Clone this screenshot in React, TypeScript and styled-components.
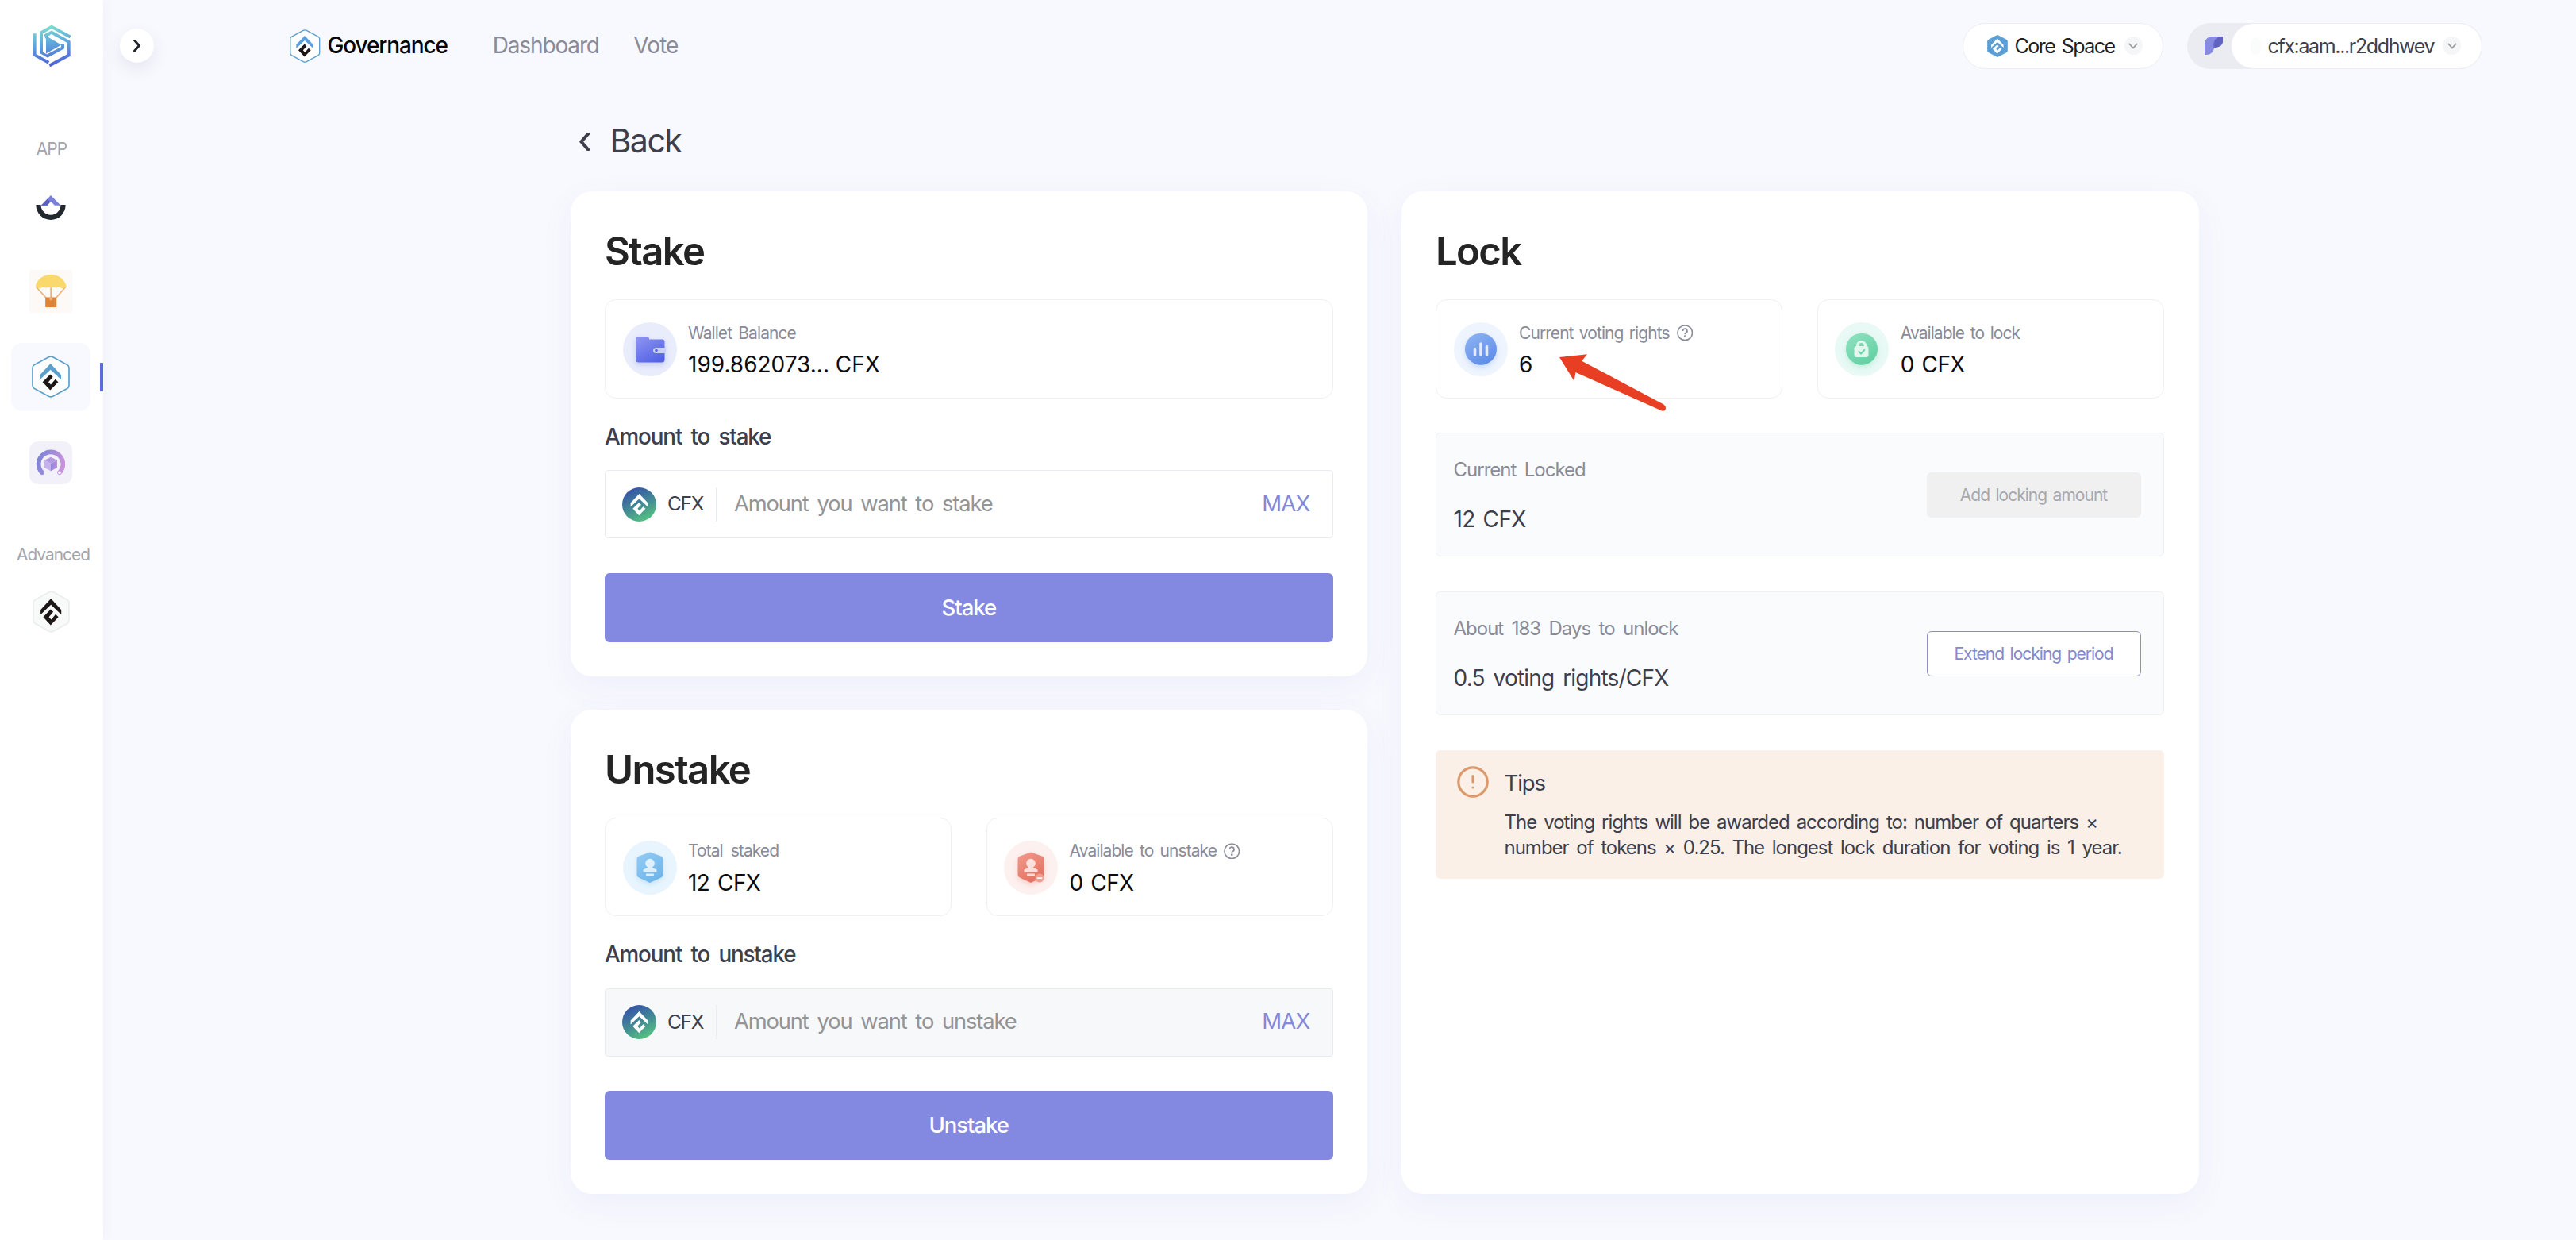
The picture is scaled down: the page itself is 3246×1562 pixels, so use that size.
import React from "react";
import styled, { createGlobalStyle } from "styled-components";

const Global = createGlobalStyle`
  *, *::before, *::after { box-sizing: border-box; }
  body {
    margin: 0;
    background: #f8f9fe;
    color: #3d3f4c;
    font-family: Inter, "Liberation Sans", sans-serif;
    font-kerning: normal;
  }
  svg { display: block; flex: none; }
`;

/* ---------- primitives ---------- */

const Text = styled.span<{ size: number; ls?: number; ws?: number; weight?: number; color?: string; lh?: number }>`
  display: block;
  white-space: nowrap;
  font-size: ${(p) => p.size}px;
  letter-spacing: ${(p) => p.ls ?? 0}px;
  word-spacing: ${(p) => p.ws ?? 0}px;
  font-weight: ${(p) => p.weight ?? 400};
  color: ${(p) => p.color ?? "inherit"};
  line-height: ${(p) => (p.lh ? `${p.lh}px` : "1.2")};
`;

/* ---------- drawings ---------- */

const HEX = "M184 121.500Q192 117.500 200 121.500L255 151Q261 155 261 162V228Q261 235 255 239L200 268.500Q192 272.500 184 268.500L129 239Q123 235 123 228V162Q123 155 129 151Z";
const CHEVRON = "191,146 231,188 231,206 191,169 151,206 151,188";
const HOOK = "190,186 200,196 183,215 192,225 209,205 220,215 190,246 161,215";

const HexMark = ({ w, h, stroke, line, fill, top, bottom }: { w: number; h: number; stroke: string; line: number; fill: string; top: string; bottom: string }) => (
  <svg width={w} height={h} viewBox="120 116 144 158" preserveAspectRatio="none">
    <path d={HEX} fill={fill} stroke={stroke} strokeWidth={line} />
    <polygon points={CHEVRON} fill={top} />
    <polygon points={HOOK} fill={bottom} />
  </svg>
);

const SpaceIcon = () => (
  <svg width="26" height="28" viewBox="120 116 144 158" preserveAspectRatio="none">
    <path d={HEX} fill="#5b9fd4" stroke="#5b9fd4" strokeWidth="4" />
    <g transform="translate(191 196) scale(1.08) translate(-191 -196)">
      <polygon points={CHEVRON} fill="#fff" />
      <polygon points={HOOK} fill="#fff" />
    </g>
  </svg>
);

const Coin = () => (
  <svg width="43" height="43" viewBox="0 0 43 43">
    <defs>
      <linearGradient id="coin" x1="0.25" y1="0.05" x2="0.7" y2="1">
        <stop offset="0" stopColor="#3653a8" />
        <stop offset="0.5" stopColor="#438a95" />
        <stop offset="1" stopColor="#55c57f" />
      </linearGradient>
    </defs>
    <circle cx="21.500" cy="21.500" r="21.500" fill="url(#coin)" />
    <g transform="translate(21.500 21.700) scale(0.272) translate(-191 -196)">
      <polygon points={CHEVRON} fill="#fff" />
      <polygon points={HOOK} fill="#fff" />
    </g>
  </svg>
);

const AppLogo = () => (
  <svg width="48" height="53" viewBox="123 94 144 158">
    <defs>
      <linearGradient id="logo" gradientUnits="userSpaceOnUse" x1="185" y1="95" x2="205" y2="250">
        <stop offset="0" stopColor="#7fe0cd" />
        <stop offset="0.45" stopColor="#5fa6dc" />
        <stop offset="1" stopColor="#4f5fd6" />
      </linearGradient>
    </defs>
    <g fill="none" stroke="url(#logo)" strokeWidth="12">
      <path d="M131 127V208L184 237" />
      <path d="M266 140L195 102L156 124V200L177 213L237 181V168" />
      <path d="M174 146V134L195 123L260 159V209L187 248" />
    </g>
    <path d="M174 136L232 170L174 203Z" fill="url(#logo)" />
    <path d="M167 138V193M190 133L248 166V187L181 223L150 205" fill="none" stroke="#fff" strokeWidth="7" />
  </svg>
);

const SwapIcon = () => (
  <svg width="38" height="33" viewBox="134 736 116 99">
    <path d="M135 775A57 58 0 0 0 249 775H230A38 39 0 0 1 154 775Z" fill="#22282e" />
    <path d="M192 738L230 777H207L192 762L178 777H155Z" fill="#7b7fdc" />
    <path d="M155 777L179 752L190 764L178 777Z" fill="#5c60c4" />
  </svg>
);

const ParachuteIcon = () => (
  <svg width="54" height="54" viewBox="111 1022 161 161">
    <rect x="111" y="1022" width="161" height="161" rx="8" fill="#fdf9f7" />
    <path d="M137 1086L174 1127M247 1086L211 1127M192 1086V1130" stroke="#e9b27c" strokeWidth="5" fill="none" />
    <path d="M134 1084C140 1056 164 1040 192 1040S244 1056 250 1084Q240 1092 231 1090Q221 1083 211 1090Q202 1083 192 1090Q182 1083 173 1090Q163 1083 153 1090Q144 1092 134 1084Z" fill="#f9d96b" />
    <rect x="171" y="1125" width="42" height="37" rx="2" fill="#dd8438" />
    <rect x="187" y="1125" width="10" height="11" fill="#f0b37e" />
  </svg>
);

const CubeIcon = () => (
  <svg width="54" height="54" viewBox="111 438 162 162">
    <defs>
      <linearGradient id="ring" x1="0" y1="0.2" x2="1" y2="0.5">
        <stop offset="0" stopColor="#7d83d8" />
        <stop offset="1" stopColor="#c793dc" />
      </linearGradient>
      <linearGradient id="ringDot" x1="0" y1="0" x2="1" y2="0">
        <stop offset="0" stopColor="#8c87d8" />
        <stop offset="1" stopColor="#c08fdc" />
      </linearGradient>
    </defs>
    <rect x="111" y="438" width="162" height="162" rx="34" fill="#f2f1f9" />
    <path d="M159 556A46 46 0 1 1 225 556" fill="none" stroke="url(#ring)" strokeWidth="17" strokeLinecap="round" />
    <circle cx="225" cy="556" r="5.500" fill="#fff" />
    <path d="M192 497L216 509L192 522L168 509Z" fill="#b69be0" />
    <path d="M168 509L192 522V550L168 537Z" fill="#c4b0ea" />
    <path d="M216 509L192 522V550L216 537Z" fill="url(#ringDot)" />
  </svg>
);

const Chevron = ({ dir, w, h, color, line }: { dir: "left" | "right" | "down"; w: number; h: number; color: string; line: number }) => {
  const d = { left: "M9 1.500L2 11L9 20.500", right: "M2 1.500L9 11L2 20.500", down: "M2 2L9 9L16 2" }[dir];
  return (
    <svg width={w} height={h} viewBox={dir === "down" ? "0 0 18 11" : "0 0 11 22"} preserveAspectRatio="none">
      <path d={d} fill="none" stroke={color} strokeWidth={line} strokeLinecap="round" strokeLinejoin="round" />
    </svg>
  );
};

const WalletGlyph = () => (
  <svg width="23" height="23" viewBox="0 0 23 23">
    <path d="M0 23V10C0 4 4 0 10 0H22C16 1 13.500 5 12 11V14C11.500 20 7 23 2 23Z" fill="#868ae0" />
    <path d="M11.500 14C10.500 5 14 0 23 0V6C23 11 19 14 11.500 14Z" fill="#6163c3" />
  </svg>
);

type Kind = "wallet" | "staked" | "unstake" | "votes" | "lock";

const halo: Record<Kind, string> = { wallet: "#e9edfb", staked: "#e9f5fe", unstake: "#fdf1ef", votes: "#eff5fe", lock: "#e9f9f5" };
const from: Record<Kind, string> = { wallet: "#8e94f0", staked: "#93cbf3", unstake: "#f09a8c", votes: "#8db4f3", lock: "#8fe2c0" };
const to: Record<Kind, string> = { wallet: "#5363e6", staked: "#6db5ea", unstake: "#e4705f", votes: "#5e8ce8", lock: "#62cfa2" };

const Stamp = () => (
  <g fill="#fff" opacity="0.75">
    <circle cx="34" cy="28.500" r="5.800" />
    <path d="M31 31H37V34L42.500 36.500V39.500H25.500V36.500L31 34Z" />
    <rect x="29" y="41.500" width="10" height="3.200" rx="0.800" />
  </g>
);

const StatIcon = ({ kind }: { kind: Kind }) => (
  <svg width="68" height="68" viewBox="0 0 68 68">
    <defs>
      <linearGradient id={`g-${kind}`} x1="0.1" y1="0" x2="0.7" y2="1">
        <stop offset="0" stopColor={from[kind]} />
        <stop offset="1" stopColor={to[kind]} />
      </linearGradient>
      <filter id={`s-${kind}`} x="-50%" y="-50%" width="200%" height="200%">
        <feDropShadow dx="0" dy="3" stdDeviation="3.500" floodColor={to[kind]} floodOpacity="0.28" />
      </filter>
    </defs>
    <circle cx="34" cy="34" r="34" fill={halo[kind]} />
    <g filter={`url(#s-${kind})`} fill={`url(#g-${kind})`}>
      {kind === "wallet" && <path d="M16 20.500Q16 18 18.500 18H30Q33 18 33 21.500H49.500Q52.500 21.500 52.500 24.500V47Q52.500 50.500 49 50.500H19.500Q16 50.500 16 47Z" />}
      {(kind === "staked" || kind === "unstake") && <path d="M34 14.500L48 19.500Q50.500 20.500 50.500 23V43Q50.500 45.500 48 46.500L34 53L20 46.500Q17.500 45.500 17.500 43V23Q17.500 20.500 20 19.500Z" />}
      {(kind === "votes" || kind === "lock") && <circle cx="34" cy="33.700" r="20" />}
    </g>
    {kind === "wallet" && (
      <>
        <path d="M54 32H42Q38 32 38 35.500T42 39H54Z" fill="#c9d0fa" />
        <circle cx="42" cy="35.500" r="1.800" fill="#5363e6" />
      </>
    )}
    {(kind === "staked" || kind === "unstake") && <Stamp />}
    {kind === "unstake" && (
      <>
        <circle cx="45" cy="47" r="5.600" fill="#f0a093" />
        <rect x="41.500" y="46.200" width="7" height="1.800" rx="0.900" fill="#fff" />
      </>
    )}
    {kind === "votes" && <path d="M26.500 33.500V41M34 27V41M41.500 30.500V41" stroke="#fff" strokeOpacity="0.8" strokeWidth="3.600" strokeLinecap="round" />}
    {kind === "lock" && (
      <>
        <path d="M28.500 31V29.500A5 5 0 0 1 38.500 29.500V31" fill="none" stroke="#e2f8ef" strokeWidth="3.200" />
        <rect x="24.500" y="30" width="18" height="14" rx="3" fill="#e2f8ef" />
        <path d="M30.500 37L33 39.500L37.300 35" fill="none" stroke="#6bd3a9" strokeWidth="2" strokeLinecap="round" />
      </>
    )}
  </svg>
);

const HelpIcon = () => (
  <svg width="20.500" height="20.500" viewBox="0 0 24 24" fill="none" stroke="#898b98" strokeWidth="1.900">
    <circle cx="12" cy="12" r="10.900" />
    <path d="M8.800 9.400A3.200 3.200 0 1 1 12.900 12.300Q12 12.800 12 14.200" />
    <circle cx="12" cy="17.200" r="0.600" />
  </svg>
);

const WarnIcon = () => (
  <svg width="40" height="40" viewBox="0 0 40 40" fill="none" stroke="#dc9a6c" strokeWidth="3.200">
    <circle cx="20" cy="20" r="18.200" />
    <path d="M20 12.500V20" strokeLinecap="round" />
    <circle cx="20" cy="27" r="1.600" fill="#dc9a6c" stroke="none" />
  </svg>
);

/* ---------- shell ---------- */

const Shell = styled.div`
  display: flex;
  height: 1562px;
  overflow: hidden;
`;

const Sidebar = styled.aside`
  flex: none;
  width: 130px;
  background: #fff;
  display: flex;
  flex-direction: column;
  align-items: center;
  box-shadow: 2px 0 14px rgba(90, 100, 180, 0.05);
`;

const LogoSlot = styled.div`
  height: 115px;
  display: flex;
  align-items: center;
`;

const GroupLabel = styled.div<{ pad: number; indent?: number }>`
  height: 101.500px;
  padding-top: ${(p) => p.pad}px;
  padding-left: ${(p) => p.indent ?? 0}px;
`;

const Nav = styled.nav`
  width: 100%;
  display: flex;
  flex-direction: column;
  gap: 21.700px;
`;

const NavItem = styled.a<{ active?: boolean; drop?: number }>`
  position: relative;
  width: 100px;
  height: 86px;
  margin-left: 14px;
  padding-top: ${(p) => p.drop ?? 0}px;
  border-radius: 14px;
  display: flex;
  align-items: center;
  justify-content: center;
  background: ${(p) => (p.active ? "#f7f9fe" : "transparent")};
  &::after {
    content: "";
    display: ${(p) => (p.active ? "block" : "none")};
    position: absolute;
    right: -16px;
    top: 25px;
    width: 4px;
    height: 36px;
    background: #5a6cdf;
  }
`;

const Page = styled.div`
  flex: 1;
  display: flex;
  flex-direction: column;
`;

const Header = styled.header`
  height: 115px;
  display: flex;
  align-items: center;
  padding: 0 118.500px 0 21px;
`;

const Toggle = styled.button`
  width: 43px;
  height: 43px;
  padding: 0;
  border: 0;
  border-radius: 50%;
  background: #fff;
  display: flex;
  align-items: center;
  justify-content: center;
  box-shadow: 0 8px 20px rgba(60, 70, 130, 0.1);
`;

const Brand = styled.div`
  margin-left: 171px;
  display: flex;
  align-items: center;
  gap: 9px;
`;

const Links = styled.nav`
  flex: 1;
  margin-left: 57px;
  display: flex;
  gap: 43.500px;
`;

const Pill = styled.div`
  height: 58px;
  width: 253px;
  padding-left: 30px;
  border: 1px solid #eceef4;
  border-radius: 29px;
  background: #fff;
  display: flex;
  align-items: center;
  gap: 9px;
`;

const Account = styled.div`
  height: 58px;
  width: 372px;
  margin-left: 30px;
  border-radius: 29px;
  background: #ebecf1;
  display: flex;
  align-items: center;
  justify-content: space-between;
  padding-left: 22px;
`;

const Address = styled.div`
  height: 58px;
  width: 317px;
  padding-left: 23px;
  border: 1px solid #eceef4;
  border-radius: 29px;
  background: #fff;
  display: flex;
  align-items: center;
  gap: 8px;
`;

const Dot = styled.i`
  width: 15px;
  height: 22px;
  border-radius: 50%;
  background: #fafcfc;
`;

const Caret = styled.i`
  width: 23px;
  height: 23px;
  margin-left: 3px;
  border-radius: 50%;
  background: #f5f6f8;
  display: flex;
  align-items: center;
  justify-content: center;
`;

const BackRow = styled.div`
  height: 126px;
  padding-left: 600px;
  display: flex;
  align-items: center;
  gap: 25px;
`;

const Columns = styled.main`
  padding-left: 588.500px;
  display: grid;
  grid-template-columns: 1004.500px 1005px;
  gap: 42.500px;
  height: 1263.300px;
`;

const Stack = styled.div`
  display: flex;
  flex-direction: column;
  gap: 42.300px;
`;

/* ---------- cards ---------- */

const Card = styled.section<{ tall?: boolean }>`
  height: ${(p) => (p.tall ? "1263.300px" : "610.500px")};
  padding: 0 43.500px;
  border-radius: 27px;
  background: #fff;
  box-shadow: 0 12px 40px rgba(92, 104, 210, 0.065);
`;

const TitleBar = styled.div`
  height: 136px;
  padding-top: 16px;
  display: flex;
  align-items: center;
`;

const Stats = styled.div`
  display: flex;
  gap: 43.500px;
`;

const StatBox = styled.div`
  position: relative;
  flex: 1;
  height: 124.500px;
  padding: 1px 0 0 21.500px;
  border: 1px solid #eff0f4;
  border-radius: 14px;
  display: flex;
  align-items: center;
  gap: 14.500px;
`;

const StatText = styled.div`
  padding-top: 3px;
`;

const LabelLine = styled.div`
  height: 35px;
  display: flex;
  align-items: center;
  gap: 9px;
`;

const FieldLabel = styled.div`
  height: 90.500px;
  padding-top: 7px;
  display: flex;
  align-items: center;
`;

const Field = styled.div<{ muted?: boolean }>`
  height: 86px;
  padding: 0 28px 0 20.500px;
  border: 1px solid #eaebef;
  border-radius: 4px;
  background: ${(p) => (p.muted ? "#f7f8fa" : "#fff")};
  display: flex;
  align-items: center;
`;

const Unit = styled.div`
  width: 77px;
  height: 43px;
  padding: 0 0 1px 14.500px;
  border-right: 2px solid #ebecef;
  display: flex;
  align-items: center;
`;

const Placeholder = styled.div`
  flex: 1;
  padding-left: 21.500px;
`;

const Max = styled.div`
  padding-bottom: 2px;
`;

const Primary = styled.button`
  display: flex;
  align-items: center;
  justify-content: center;
  width: 100%;
  height: 87px;
  margin-top: 43.500px;
  padding: 0;
  border: 0;
  border-radius: 6px;
  background: #8389e0;
  font-family: inherit;
`;

const Panel = styled.div`
  height: 156.300px;
  margin-top: 43.700px;
  padding: 0 28.500px 0 21.500px;
  border: 1px solid #ecf1f4;
  border-radius: 6px;
  background: #fafbfd;
  display: flex;
  align-items: center;
  justify-content: space-between;
`;

const Action = styled.button<{ off?: boolean }>`
  width: 270px;
  height: 57px;
  padding: 0;
  border: 1px solid ${(p) => (p.off ? "#f0f0f1" : "#8c8fc4")};
  border-radius: 6px;
  background: ${(p) => (p.off ? "#f0f0f1" : "#fff")};
  display: flex;
  align-items: center;
  justify-content: center;
  font-family: inherit;
`;

const Tips = styled.div`
  height: 162px;
  margin-top: 43.700px;
  padding: 20px 0 0 26.500px;
  border-radius: 6px;
  background: #faf0e8;
  display: flex;
  gap: 20px;
`;

const TipsBody = styled.div`
  margin-top: 12.500px;
`;

const Pointer = styled.svg`
  position: absolute;
  left: 153.500px;
  top: 67px;
  z-index: 2;
`;

const Arrow = () => (
  <Pointer width="137" height="75" viewBox="0 0 137 75">
    <path d="M1 5L36 1.300L29.200 9.700L132.500 64.500Q136 67.500 134.500 71Q133.500 73.500 130 72.500L21.400 24L19.600 35Z" fill="#e83f24" />
  </Pointer>
);

type StatProps = { kind: Kind; label: string; ws?: number; value: string; ls?: number; help?: boolean; children?: React.ReactNode };

const Stat = ({ kind, label, ws = 3.2, value, ls = -0.6, help, children }: StatProps) => (
  <StatBox>
    <StatIcon kind={kind} />
    <StatText>
      <LabelLine>
        <Text size={21} ls={-0.93} ws={ws} color="#898b98">{label}</Text>
        {help && <HelpIcon />}
      </LabelLine>
      <Text size={28} ls={ls} ws={ls ? 2.5 : 0} lh={44} color="#0c0c0e">{value}</Text>
    </StatText>
    {children}
  </StatBox>
);

const Title = ({ children }: { children: React.ReactNode }) => (
  <TitleBar><Text size={49} ls={-1.6} weight={560} lh={60} color="#242424">{children}</Text></TitleBar>
);

const Amount = ({ verb, muted }: { verb: string; muted?: boolean }) => (
  <>
    <FieldLabel><Text size={27.8} ls={-1.15} ws={5} weight={500}>Amount to {verb}</Text></FieldLabel>
    <Field muted={muted}>
      <Coin />
      <Unit><Text size={24.5} ls={-1.3}>CFX</Text></Unit>
      <Placeholder><Text size={27.3} ls={-1.12} ws={4.3} color="#939496">Amount you want to {verb}</Text></Placeholder>
      <Max><Text size={27.5} ls={-0.75} color="#8389d8">MAX</Text></Max>
    </Field>
  </>
);

const LockPanel = ({ label, value, ls, ws, children }: { label: string; value: string; ls: number; ws: number; children: React.ReactNode }) => (
  <Panel>
    <div>
      <Text size={24} ls={-1} ws={4.7} lh={62.5} color="#898b98">{label}</Text>
      <Text size={28} ls={ls} ws={ws} lh={62.5}>{value}</Text>
    </div>
    {children}
  </Panel>
);

export default function App() {
  return (
    <>
      <Global />
      <Shell>
        <Sidebar>
          <LogoSlot><AppLogo /></LogoSlot>
          <GroupLabel pad={61}><Text size={20.8} ls={-0.8} color="#a3a4ab">APP</Text></GroupLabel>
          <Nav>
            <NavItem drop={4}><SwapIcon /></NavItem>
            <NavItem><ParachuteIcon /></NavItem>
            <NavItem active>
              <HexMark w={48} h={53} stroke="#5b9fcd" line={5} fill="#fff" top="#5b9fcd" bottom="#1d1817" />
            </NavItem>
            <NavItem><CubeIcon /></NavItem>
          </Nav>
          <GroupLabel pad={61} indent={4}><Text size={20.8} ls={-0.95} color="#a3a4ab">Advanced</Text></GroupLabel>
          <Nav>
            <NavItem>
              <HexMark w={47} h={53} stroke="#e9eeed" line={5} fill="#f8faf9" top="#1d1817" bottom="#1d1817" />
            </NavItem>
          </Nav>
        </Sidebar>

        <Page>
          <Header>
            <Toggle><Chevron dir="right" w={9} h={15} color="#22242c" line={4} /></Toggle>
            <Brand>
              <HexMark w={38.5} h={42} stroke="#5b9fcd" line={5} fill="#fff" top="#5b9fe0" bottom="#1d1817" />
              <Text size={28} ls={-1.15} weight={520} color="#050506">Governance</Text>
            </Brand>
            <Links>
              <Text size={28} ls={-1.14} color="#898b98">Dashboard</Text>
              <Text size={28} ls={-0.95} color="#898b98">Vote</Text>
            </Links>
            <Pill>
              <SpaceIcon />
              <Text size={25} ls={-1.5} ws={2.8} color="#1e1f24">Core Space</Text>
              <Caret><Chevron dir="down" w={12} h={8} color="#9b9ca1" line={2.6} /></Caret>
            </Pill>
            <Account>
              <WalletGlyph />
              <Address>
                <Dot />
                <Text size={25} ls={-1.36} color="#3d3f4c">cfx:aam...r2ddhwev</Text>
                <Caret><Chevron dir="down" w={12} h={8} color="#9b9ca1" line={2.6} /></Caret>
              </Address>
            </Account>
          </Header>

          <BackRow>
            <Chevron dir="left" w={13.5} h={23} color="#3d3f4c" line={3.6} />
            <Text size={41.2} ls={-1.6} weight={430}>Back</Text>
          </BackRow>

          <Columns>
            <Stack>
              <Card>
                <Title>Stake</Title>
                <Stats>
                  <Stat kind="wallet" label="Wallet Balance" value="199.862073... CFX" ls={0} />
                </Stats>
                <Amount verb="stake" />
                <Primary><Text size={27.5} ls={-1.05} weight={500} color="#fff">Stake</Text></Primary>
              </Card>
              <Card>
                <Title>Unstake</Title>
                <Stats>
                  <Stat kind="staked" label="Total staked" ws={5} value="12 CFX" />
                  <Stat kind="unstake" label="Available to unstake" value="0 CFX" help />
                </Stats>
                <Amount verb="unstake" muted />
                <Primary><Text size={27.5} ls={-1.05} weight={500} color="#fff">Unstake</Text></Primary>
              </Card>
            </Stack>

            <Card tall>
              <Title>Lock</Title>
              <Stats>
                <Stat kind="votes" label="Current voting rights" ws={2.3} value="6" help><Arrow /></Stat>
                <Stat kind="lock" label="Available to lock" ws={2.6} value="0 CFX" />
              </Stats>
              <LockPanel label="Current Locked" value="12 CFX" ls={-0.6} ws={2.5}>
                <Action off><Text size={21} ls={-0.98} ws={2.5} color="#a7a8ae">Add locking amount</Text></Action>
              </LockPanel>
              <LockPanel label="About 183 Days to unlock" value="0.5 voting rights/CFX" ls={-0.8} ws={3.7}>
                <Action><Text size={21} ls={-1} ws={2.6} color="#8389cf">Extend locking period</Text></Action>
              </LockPanel>
              <Tips>
                <WarnIcon />
                <div>
                  <Text size={27.5} ls={-1.1} lh={42}>Tips</Text>
                  <TipsBody>
                    <Text size={24} ls={-1} ws={3.2} lh={32}>The voting rights will be awarded according to: number of quarters ×</Text>
                    <Text size={24} ls={-1} ws={3.9} lh={32}>number of tokens × 0.25. The longest lock duration for voting is 1 year.</Text>
                  </TipsBody>
                </div>
              </Tips>
            </Card>
          </Columns>
        </Page>
      </Shell>
    </>
  );
}
